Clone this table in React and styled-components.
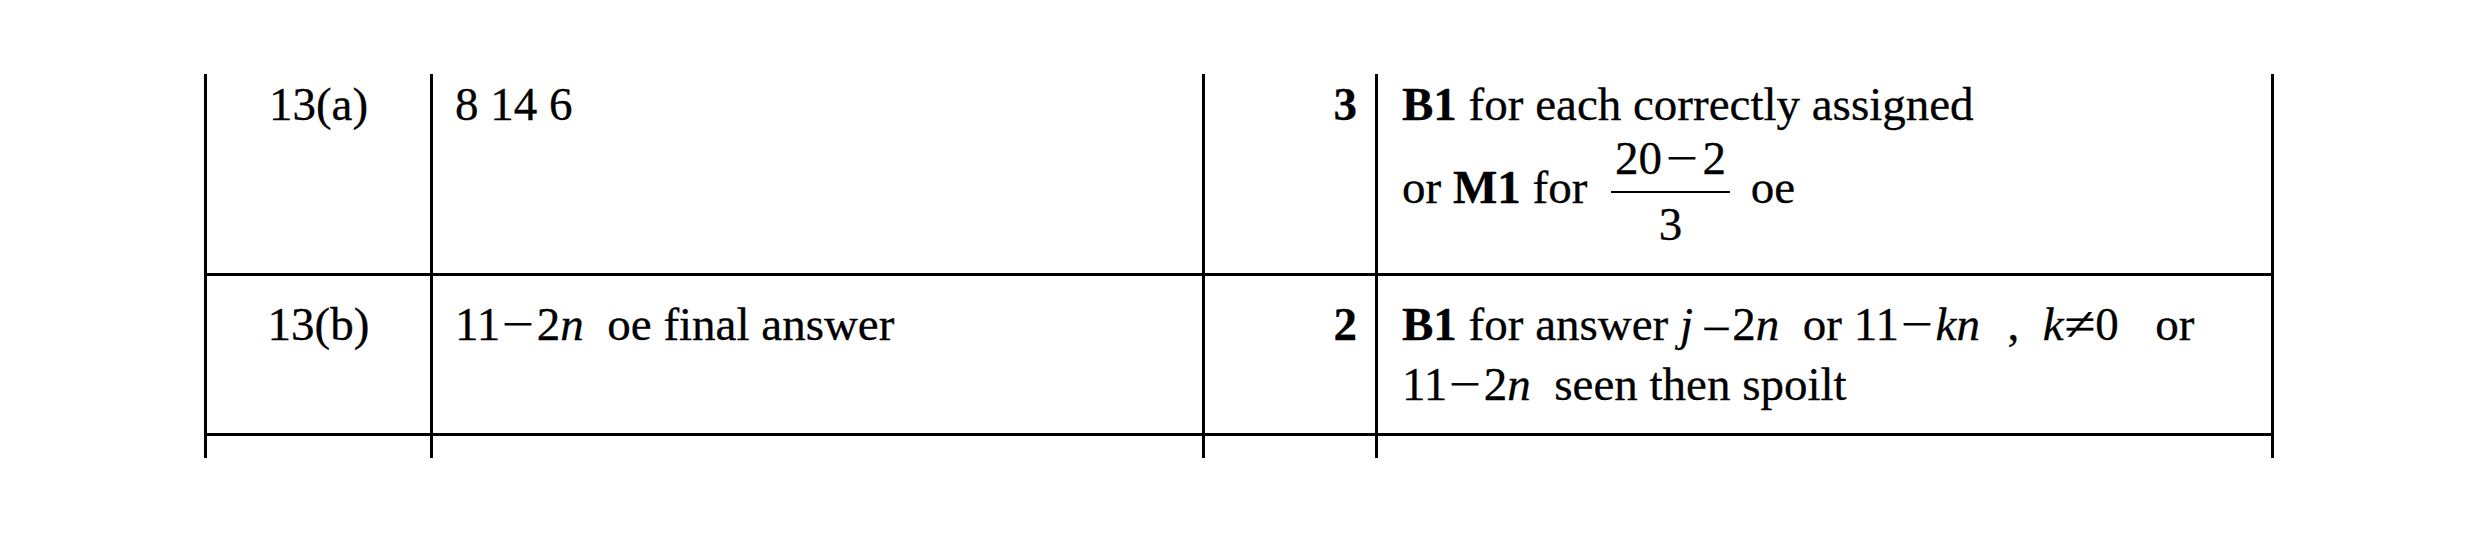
import React from 'react';
import styled, { createGlobalStyle } from 'styled-components';

const GlobalStyle = createGlobalStyle`
  html, body {
    margin: 0;
    padding: 0;
    background: #fff;
  }
  body {
    font-family: "Liberation Serif", "Times New Roman", serif;
    color: #000;
  }
`;

const Page = styled.div`
  width: 2480px;
  height: 534px;
  padding: 74px 0 0 204px;
  box-sizing: border-box;
  overflow: hidden;
`;

const Table = styled.div`
  width: 2070px;
  font-size: 47px;
  line-height: 60px;
  -webkit-text-stroke: 0.3px #000;
`;

const Row = styled.div`
  --pad: ${p => p.$pad || 0}px;
  display: grid;
  grid-template-columns: 226px 772px 173px 899px;
  height: ${p => p.$height}px;
  box-sizing: border-box;
  border-bottom: ${p => (p.$open ? 'none' : '3px solid #000')};
`;

const Cell = styled.div`
  box-sizing: border-box;
  border-left: 3px solid #000;
  padding-top: var(--pad);
  white-space: nowrap;
`;

const Label = styled(Cell)`
  text-align: center;
`;

const Answer = styled(Cell)`
  padding-left: 22px;
`;

const Mark = styled(Cell)`
  text-align: right;
  padding-right: 18px;
  font-weight: bold;
`;

const Guidance = styled(Cell)`
  border-right: 3px solid #000;
  padding-left: 24px;
`;

const Line = styled.div``;

const B = styled.b`
  font-weight: bold;
`;

const V = styled.i`
  font-style: italic;
`;

// wide math operator (minus, not-equal), as set by the equation editor
const Op = styled.span`
  display: inline-block;
  transform: scaleX(1.2);
  margin: 0 ${p => p.$r ?? 5}px 0 ${p => p.$l ?? 5}px;
`;

const Dash = styled.span`
  margin-right: 4px;
`;

// extra room left around equations
const Pad = styled.span`
  margin-left: ${p => p.$w}px;
`;

const Frac = styled.span`
  display: inline-flex;
  flex-direction: column;
  align-items: stretch;
  vertical-align: 29px;
  margin: 0 9px 0 12px;
  text-align: center;
`;

const Num = styled.span`
  display: block;
  line-height: 49px;
  padding: 0 4px 8px;
`;

const Bar = styled.span`
  display: block;
  height: 2px;
  background: #000;
`;

const Den = styled.span`
  display: block;
  line-height: 40px;
  padding-top: 11px;
`;

export default function App() {
  return (
    <Page>
      <GlobalStyle />
      <Table>
        <Row $height={202} $pad={0}>
          <Label>13(a)</Label>
          <Answer>8 14 6</Answer>
          <Mark>3</Mark>
          <Guidance>
            <Line>
              <B>B1</B> for each correctly assigned
            </Line>
            <Line>
              or <B>M1</B> for{' '}
              <Frac>
                <Num>
                  20<Op $l={7} $r={7}>−</Op>2
                </Num>
                <Bar />
                <Den>3</Den>
              </Frac>{' '}
              oe
            </Line>
          </Guidance>
        </Row>
        <Row $height={160} $pad={18}>
          <Label>13(b)</Label>
          <Answer>
            11<Op>−</Op>2<V>n</V>&nbsp; oe final answer
          </Answer>
          <Mark>2</Mark>
          <Guidance>
            <Line>
              <B>B1</B> for answer <V>j</V> <Dash>–</Dash>2<V>n</V>&nbsp; or 11<Op>−</Op><V>kn</V>&nbsp; <Pad $w={4}>,</Pad>&nbsp; <V>k</V>
              <Op $l={3} $r={3}>≠</Op>0&nbsp; <Pad $w={13}>or</Pad>
            </Line>
            <Line>
              11<Op>−</Op>2<V>n</V>&nbsp; seen then spoilt
            </Line>
          </Guidance>
        </Row>
        <Row $height={22} $open>
          <Label />
          <Answer />
          <Mark />
          <Guidance />
        </Row>
      </Table>
    </Page>
  );
}
